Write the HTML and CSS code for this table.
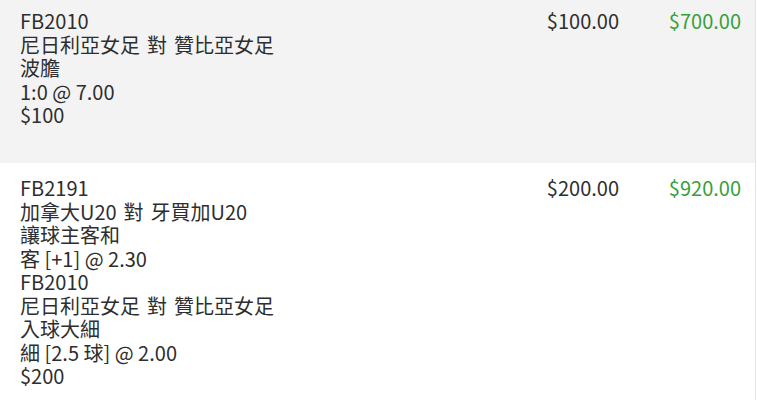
FILE: index.html
```html
<!DOCTYPE html>
<html lang="zh-TW">
<head>
    <meta charset="UTF-8">
    <meta name="viewport" content="width=device-width, initial-scale=1.0">
    <title>投注記錄</title>
    <link rel="stylesheet" href="styles.css">
</head>
<body>
    <!-- 投注列表 -->
    <div class="bet-list">
        <!-- 第一筆 -->
        <div class="bet-row bet-row-grey">
            <div class="bet-detail">
                <div>FB2010</div>
                <div class="match">尼日利亞女足 對 贊比亞女足</div>
                <div>波膽</div>
                <div>1:0 @ 7.00</div>
                <div>$100</div>
            </div>
            <div class="bet-stake">$100.00</div>
            <div class="bet-return">$700.00</div>
        </div>
        <!-- 第二筆 -->
        <div class="bet-row">
            <div class="bet-detail">
                <div>FB2191</div>
                <div class="match">加拿大U20 對 牙買加U20</div>
                <div>讓球主客和</div>
                <div>客 [+1] @ 2.30</div>
                <div>FB2010</div>
                <div class="match">尼日利亞女足 對 贊比亞女足</div>
                <div>入球大細</div>
                <div>細 [2.5 球] @ 2.00</div>
                <div>$200</div>
            </div>
            <div class="bet-stake">$200.00</div>
            <div class="bet-return">$920.00</div>
        </div>
    </div>
</body>
</html>
```

FILE: styles.css
```css
body {
    margin: 0;
    background-color: white;
    color: #2e2e2e;
    font-family: "Noto Sans CJK TC", "Noto Sans", sans-serif;
    font-size: 20px;
    line-height: 23.5px;
}

/* 列表容器 */
.bet-list {
    margin-right: 1px;
    border-right: 1px solid #e4e4e4;
}

/* 每一筆投注 */
.bet-row {
    display: grid;
    grid-template-columns: 1fr 100px 122px;
    padding: 13px 14px 12px 20px;
}

.bet-row-grey {
    background-color: #f3f3f3;
    padding-top: 9px;
    padding-bottom: 36.5px;
}

/* 賽事名稱，空格略寬 */
.match {
    word-spacing: 2.5px;
}

/* 金額欄 */
.bet-stake,
.bet-return {
    text-align: right;
}

.bet-return {
    color: #36a03a;
}
```
